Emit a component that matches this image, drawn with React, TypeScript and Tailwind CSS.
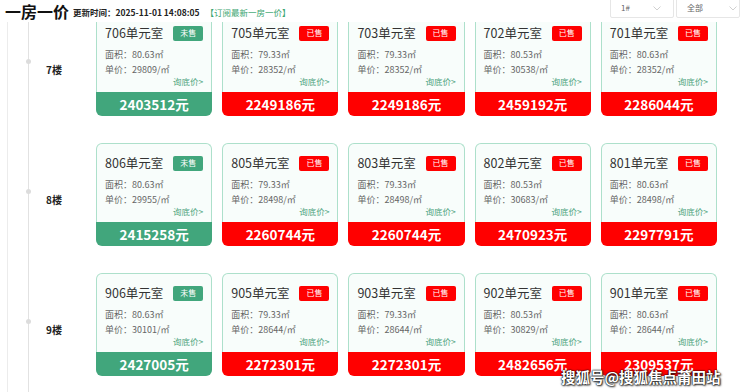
import React from "react";

type Unit = { room: string; sold: boolean; area: string; price: string; total: string };

const floors: { floor: string; units: Unit[] }[] = [
  {
    floor: "7楼",
    units: [
      { room: "706", sold: false, area: "80.63", price: "29809", total: "2403512" },
      { room: "705", sold: true, area: "79.33", price: "28352", total: "2249186" },
      { room: "703", sold: true, area: "79.33", price: "28352", total: "2249186" },
      { room: "702", sold: true, area: "80.53", price: "30538", total: "2459192" },
      { room: "701", sold: true, area: "80.63", price: "28352", total: "2286044" },
    ],
  },
  {
    floor: "8楼",
    units: [
      { room: "806", sold: false, area: "80.63", price: "29955", total: "2415258" },
      { room: "805", sold: true, area: "79.33", price: "28498", total: "2260744" },
      { room: "803", sold: true, area: "79.33", price: "28498", total: "2260744" },
      { room: "802", sold: true, area: "80.53", price: "30683", total: "2470923" },
      { room: "801", sold: true, area: "80.63", price: "28498", total: "2297791" },
    ],
  },
  {
    floor: "9楼",
    units: [
      { room: "906", sold: false, area: "80.63", price: "30101", total: "2427005" },
      { room: "905", sold: true, area: "79.33", price: "28644", total: "2272301" },
      { room: "903", sold: true, area: "79.33", price: "28644", total: "2272301" },
      { room: "902", sold: true, area: "80.53", price: "30829", total: "2482656" },
      { room: "901", sold: true, area: "80.63", price: "28644", total: "2309537" },
    ],
  },
];

function Chevron() {
  return (
    <svg width="8" height="5" viewBox="0 0 8 5" fill="none">
      <path d="M0.5 0.5 L4 4 L7.5 0.5" stroke="#c4c4c4" strokeWidth="0.8" />
    </svg>
  );
}

function Card({ u }: { u: Unit }) {
  return (
    <div className="flex h-[103px] flex-col">
      <div className="flex flex-1 flex-col rounded-t-[6px] border-x border-t border-[#ade0cb] bg-[#f8fdfb] px-[8px] pt-[11px]">
        <div className="flex h-[16px] items-center justify-between">
          <span className="text-[12.5px] leading-none text-[#333]">{u.room}单元室</span>
          <span
            className={
              "flex h-[15px] w-[30px] items-center justify-center rounded-[2px] text-[8px] text-white " +
              (u.sold ? "bg-[#ff0000]" : "bg-[#41a67c]")
            }
          >
            {u.sold ? "已售" : "未售"}
          </span>
        </div>
        <div className="mt-[6px] text-[9px] leading-[15px] text-[#666]">面积：{u.area}㎡</div>
        <div className="text-[9px] leading-[15px] text-[#666]">单价：{u.price}/㎡</div>
        <div className="-mt-[2px] text-right text-[8.5px] leading-[12px] text-[#4ea47e]">询底价&gt;</div>
      </div>
      <div
        className={
          "flex h-[24px] items-center justify-center rounded-b-[6px] text-[13.5px] font-bold text-white " +
          (u.sold ? "bg-[#ff0000]" : "bg-[#41a67c]")
        }
      >
        {u.total}元
      </div>
    </div>
  );
}

export default function App() {
  return (
    <div
      className="relative h-[392px] w-[740px] overflow-hidden bg-white"
      style={{ fontFamily: '"Noto Sans CJK SC", "Noto Sans", sans-serif' }}
    >
      {/* header */}
      <div className="relative z-10 flex h-[22px] items-start bg-white">
        <div className="flex h-[22px] items-center pl-[5px]">
          <span className="text-[16px] font-bold leading-none text-[#111]">一房一价</span>
          <span className="ml-[4px] mt-[3px] text-[8.5px] font-bold text-[#222]">更新时间：2025-11-01 14:08:05</span>
          <span className="ml-[6px] mt-[3px] text-[8.5px] text-[#3aa570]">【订阅最新一房一价】</span>
        </div>
        <div className="ml-auto flex">
          <div className="-mt-[2px] flex h-[20px] w-[64px] items-center justify-between rounded-[2px] border border-[#e6e6e6] pl-[10px] pr-[12px] text-[8px] text-[#666]">
            <span>1#</span>
            <Chevron />
          </div>
          <div className="-mt-[2px] ml-[2px] flex h-[20px] w-[64px] items-center justify-between rounded-[2px] border border-[#e6e6e6] pl-[10px] pr-[2px] text-[8px] text-[#666]">
            <span>全部</span>
            <Chevron />
          </div>
        </div>
      </div>

      {/* content */}
      <div className="-mt-[9px] pl-[7px]">
        <div className="border-l border-[#ececec]">
          <div className="ml-[20px] border-l border-[#e2e2e2]">
            {floors.map((f) => (
              <div key={f.floor} className="relative flex h-[130px]">
                <span className="absolute left-[-3px] top-[46px] h-[5px] w-[5px] rounded-full bg-[#dcdcdc]" />
                <div className="flex w-[67px] items-start pl-[17px] pt-[49px]">
                  <span className="text-[10px] font-bold text-[#222]">{f.floor}</span>
                </div>
                <div className="grid w-[621px] grid-cols-5 gap-[10px]">
                  {f.units.map((u) => (
                    <Card key={u.room} u={u} />
                  ))}
                </div>
              </div>
            ))}
          </div>
        </div>
      </div>

      {/* watermark */}
      <div className="absolute left-[561px] top-[366px] text-[14.5px] font-bold text-white [text-shadow:0_0_2px_#000,0_0_1px_#000,1px_1px_2px_#333]">
        搜狐号@搜狐焦点莆田站
      </div>
    </div>
  );
}
